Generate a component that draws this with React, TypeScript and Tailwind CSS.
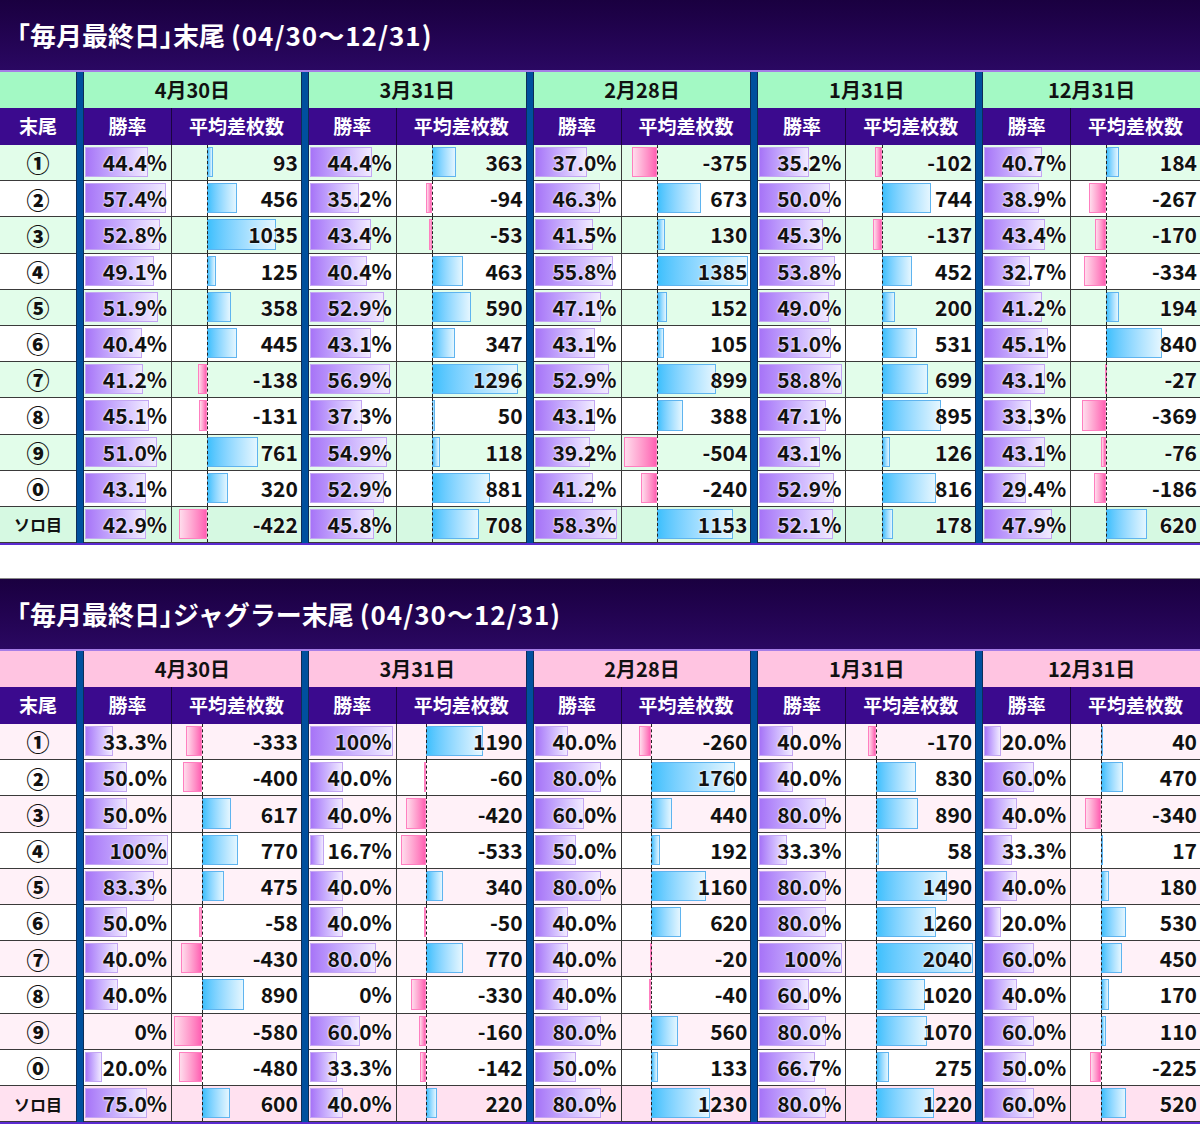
import React from "react";

type Cell = [number, number];

const dates = ["4月30日", "3月31日", "2月28日", "1月31日", "12月31日"];
const labels = ["①", "②", "③", "④", "⑤", "⑥", "⑦", "⑧", "⑨", "⓪", "ソロ目"];

const t1: Cell[][] = [
  [[44.4, 93], [44.4, 363], [37.0, -375], [35.2, -102], [40.7, 184]],
  [[57.4, 456], [35.2, -94], [46.3, 673], [50.0, 744], [38.9, -267]],
  [[52.8, 1035], [43.4, -53], [41.5, 130], [45.3, -137], [43.4, -170]],
  [[49.1, 125], [40.4, 463], [55.8, 1385], [53.8, 452], [32.7, -334]],
  [[51.9, 358], [52.9, 590], [47.1, 152], [49.0, 200], [41.2, 194]],
  [[40.4, 445], [43.1, 347], [43.1, 105], [51.0, 531], [45.1, 840]],
  [[41.2, -138], [56.9, 1296], [52.9, 899], [58.8, 699], [43.1, -27]],
  [[45.1, -131], [37.3, 50], [43.1, 388], [47.1, 895], [33.3, -369]],
  [[51.0, 761], [54.9, 118], [39.2, -504], [43.1, 126], [43.1, -76]],
  [[43.1, 320], [52.9, 881], [41.2, -240], [52.9, 816], [29.4, -186]],
  [[42.9, -422], [45.8, 708], [58.3, 1153], [52.1, 178], [47.9, 620]],
];

const t2: Cell[][] = [
  [[33.3, -333], [100, 1190], [40.0, -260], [40.0, -170], [20.0, 40]],
  [[50.0, -400], [40.0, -60], [80.0, 1760], [40.0, 830], [60.0, 470]],
  [[50.0, 617], [40.0, -420], [60.0, 440], [80.0, 890], [40.0, -340]],
  [[100, 770], [16.7, -533], [50.0, 192], [33.3, 58], [33.3, 17]],
  [[83.3, 475], [40.0, 340], [80.0, 1160], [80.0, 1490], [40.0, 180]],
  [[50.0, -58], [40.0, -50], [40.0, 620], [80.0, 1260], [20.0, 530]],
  [[40.0, -430], [80.0, 770], [40.0, -20], [100, 2040], [60.0, 450]],
  [[40.0, 890], [0, -330], [40.0, -40], [60.0, 1020], [40.0, 170]],
  [[0, -580], [60.0, -160], [80.0, 560], [80.0, 1070], [60.0, 110]],
  [[20.0, -480], [33.3, -142], [50.0, 133], [66.7, 275], [50.0, -225]],
  [[75.0, 600], [40.0, 220], [80.0, 1230], [80.0, 1220], [60.0, 520]],
];

const fmtPct = (v: number) => (v === 100 ? "100%" : v === 0 ? "0%" : v.toFixed(1) + "%");

const FONT = "font-['Noto_Sans_CJK_JP',sans-serif]";
const ROW = "grid grid-cols-[76px_repeat(5,8px_88px_1fr)]";

function BlueBar() {
  return <div className="bg-[#00509e] border-x border-[#0d2d58]" />;
}

function Table({
  rest,
  data,
  pink,
}: {
  rest: string;
  data: Cell[][];
  pink: boolean;
}) {
  const all = data.flat();
  const maxPct = Math.max(...all.map((c) => c[0]));
  const gmin = Math.min(0, ...all.map((c) => c[1]));
  const gmax = Math.max(0, ...all.map((c) => c[1]));
  const range = gmax - gmin;
  const zero = (-gmin / range) * 100;

  const headBg = pink ? "bg-[#ffc4e1]" : "bg-[#a3f9c4]";
  const tint = pink ? "bg-[#fff1f8]" : "bg-[#e2fdea]";
  const soloTint = pink ? "bg-[#ffe1f0]" : "bg-[#d6f9e2]";

  return (
    <div>
      <div className="h-[72px] bg-linear-to-b from-[#1a0040] to-[#2a0862] border-b-2 border-[#a67ee6] flex items-center pl-[4px] pb-[2px]">
        <span className="text-white font-bold text-[26px] whitespace-pre">
          <span>「毎月最終日</span>
          <span className="[font-feature-settings:'palt']">」</span>
          <span>{rest} </span>
          <span className="tracking-[1px]">(04/30〜12/31)</span>
        </span>
      </div>
      {/* date header */}
      <div className={`${ROW} h-[36px]`}>
        <div className={headBg} />
        {dates.map((d) => (
          <React.Fragment key={d}>
            <BlueBar />
            <div className={`${headBg} col-span-2 flex items-center justify-center text-[20px] font-bold text-[#111]`}>
              {d}
            </div>
          </React.Fragment>
        ))}
      </div>
      {/* sub header */}
      <div className={`${ROW} h-[37px] text-white font-bold text-[19px]`}>
        <div className="bg-[#3b0a8e] flex items-center justify-center">末尾</div>
        {dates.map((d) => (
          <React.Fragment key={d}>
            <BlueBar />
            <div className="bg-[#3b0a8e] border-r border-[#1a0440] flex items-center justify-center">勝率</div>
            <div className="bg-[#3b0a8e] flex items-center justify-center">平均差枚数</div>
          </React.Fragment>
        ))}
      </div>
      {data.map((row, ri) => {
        const bg = ri === 10 ? soloTint : ri % 2 === 0 ? tint : "bg-white";
        return (
          <div key={ri} className={`${ROW} h-[36.2px]`}>
            <div
              className={`${bg} border-b border-[#3a3a3a] flex items-center justify-center text-[#111] ${
                ri === 10 ? "text-[16px] font-bold" : "text-[23px] font-black"
              }`}
            >
              {labels[ri]}
            </div>
            {row.map(([p, v], ci) => {
              const pw = (p / maxPct) * 100;
              const vw = (Math.abs(v) / range) * 100;
              return (
                <React.Fragment key={ci}>
                  <BlueBar />
                  <div className={`${bg} relative border-b border-r border-[#3a3a3a] flex items-center justify-end pr-[4px]`}>
                    <div className="absolute top-[2px] bottom-[3px] left-[1px] right-[3px]">
                      {p > 0 && (
                        <div
                          className="absolute inset-y-0 left-0 bg-linear-to-r from-[#a774f7] to-[#f1eaff] border border-[#c3a6f2]"
                          style={{ width: `${pw}%` }}
                        />
                      )}
                    </div>
                    <span className="relative text-[21px] font-bold text-[#111] leading-none [text-shadow:0_0_2px_#fff,0_0_2px_#fff]">
                      {fmtPct(p)}
                    </span>
                  </div>
                  <div className={`${bg} relative border-b border-[#3a3a3a] flex items-center justify-end pr-[3px]`}>
                    <div className="absolute inset-y-0 left-[2px] right-[2px]">
                      {v > 0 && (
                        <div
                          className="absolute top-[2px] bottom-[3px] bg-linear-to-r from-[#3cc0fd] to-[#e4f6ff] border border-[#5fb4ef]"
                          style={{ left: `${zero}%`, width: `${vw}%` }}
                        />
                      )}
                      {v < 0 && (
                        <div
                          className="absolute top-[2px] bottom-[3px] bg-linear-to-r from-[#ffdcec] to-[#ff5fb3] border border-[#ff7fc0]"
                          style={{ left: `${zero - vw}%`, width: `${vw}%` }}
                        />
                      )}
                      <div
                        className="absolute inset-y-0 border-l border-dashed border-[#222]"
                        style={{ left: `${zero}%` }}
                      />
                    </div>
                    <span className="relative text-[21px] font-bold text-[#111] leading-none [text-shadow:0_0_2px_#fff,0_0_2px_#fff]">
                      {v}
                    </span>
                  </div>
                </React.Fragment>
              );
            })}
          </div>
        );
      })}
      <div className="h-[2px] bg-[#5b2bd0]" />
    </div>
  );
}

export default function App() {
  return (
    <div className={`w-[1200px] bg-white ${FONT}`}>
      <Table rest="末尾" data={t1} pink={false} />
      <div className="h-[34px] bg-white border-b border-[#888]" />
      <Table rest="ジャグラー末尾" data={t2} pink={true} />
    </div>
  );
}
